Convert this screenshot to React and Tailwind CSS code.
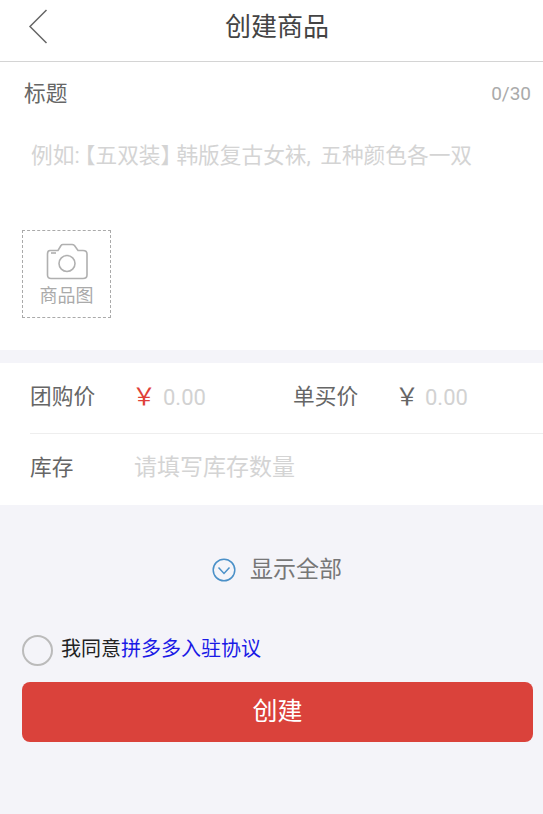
const font = { fontFamily: '"Roboto", "Noto Sans CJK SC", sans-serif' };

function BackIcon() {
  return (
    <svg width="20" height="36" viewBox="0 0 20 36" fill="none" stroke="#666" strokeWidth="1.5">
      <path d="M18.5 1 L2 17.5 L18.5 34" />
    </svg>
  );
}

function CameraIcon() {
  return (
    <svg width="42" height="38" viewBox="0 0 42 38" fill="none" stroke="#b0b0b0" strokeWidth="1.6">
      <path d="M4 8.5 H12 L15 3.5 Q15.5 2.5 17 2.5 H26 Q27.5 2.5 28.5 3.5 L32 8.5 H37 Q41 8.5 41 12 V33 Q41 36.5 37 36.5 H5 Q1.5 36.5 1.5 33 V12 Q1.5 8.5 4 8.5 Z" />
      <circle cx="21" cy="21.5" r="8" />
      <path d="M5 11 H10" />
    </svg>
  );
}

function ChevronCircle() {
  return (
    <svg width="24" height="24" viewBox="0 0 24 24" fill="none" stroke="#4a90c8" strokeWidth="1.5">
      <circle cx="12" cy="12" r="10.8" />
      <path d="M6.5 9.5 L12 15.5 L17.5 9.5" />
    </svg>
  );
}

export default function App() {
  return (
    <div style={font} className="h-[814px] w-[543px] overflow-hidden bg-[#f4f4f9]">
      {/* HEADER */}
      <div className="flex h-[62px] items-center border-b border-[#d4d4d4] bg-white pb-[7px] pl-[28px]">
        <BackIcon />
        <span className="ml-[177px] text-[26px] text-[#444]">创建商品</span>
      </div>

      {/* TITLE */}
      <div className="h-[288px] bg-white">
        <div className="flex items-center justify-between pl-[24px] pr-[12px] pt-[17px]">
          <span className="text-[21.7px] leading-[30px] text-[#666]">标题</span>
          <span className="text-[19px] leading-[30px] text-[#aaa]">0/30</span>
        </div>
        <p className="mt-[32px] whitespace-nowrap pl-[31px] text-[21.7px] leading-[30px] text-[#d4d4d4]">
          例如:<span className="ml-[5px] [font-feature-settings:'halt']">【</span>五双装<span className="mr-[5px] [font-feature-settings:'halt']">】</span>韩版复古女袜,<span className="ml-[4px]"> 五种颜色各一双</span>
        </p>
        <div className="ml-[22px] mt-[59px] flex h-[88px] w-[89px] flex-col items-center border border-dashed border-[#aaa] pt-[11px]">
          <CameraIcon />
          <span className="mt-[4px] text-[18px] leading-[24px] text-[#aaa]">商品图</span>
        </div>
      </div>

      {/* PRICE + STOCK */}
      <div className="mt-[13px] h-[142px] bg-white pl-[30px]">
        <div className="flex h-[71px] items-center border-b border-[#eeeeee] pb-[2px]">
          <span className="w-[102px] text-[21.7px] text-[#666]">团购价</span>
          <span className="w-[31px] text-[24px] text-[#e04038]">{"\uFFE5"}</span>
          <span className="w-[130px] text-[22px] text-[#d2d2d2]">0.00</span>
          <span className="w-[102px] text-[21.7px] text-[#666]">单买价</span>
          <span className="w-[30px] text-[24px] text-[#666]">{"\uFFE5"}</span>
          <span className="text-[22px] text-[#d2d2d2]">0.00</span>
        </div>
        <div className="flex h-[70px] items-center pb-[2px]">
          <span className="w-[104px] text-[21.7px] text-[#666]">库存</span>
          <span className="text-[23px] text-[#d4d4d4]">请填写库存数量</span>
        </div>
      </div>

      {/* SHOW ALL */}
      <div className="mt-[50px] flex items-center pl-[212px]">
        <ChevronCircle />
        <span className="ml-[14px] text-[23px] leading-[30px] text-[#777]">显示全部</span>
      </div>

      {/* AGREEMENT */}
      <div className="mt-[50px] flex items-center pl-[22px]">
        <span className="h-[31px] w-[31px] rounded-full border-2 border-[#bbb]" />
        <span className="ml-[8px] -translate-y-[2px] text-[20px] leading-[30px] text-[#222]">
          我同意<span className="text-[#1a1ae6]">拼多多入驻协议</span>
        </span>
      </div>

      <button className="ml-[22px] mt-[16px] flex h-[60px] w-[511px] items-center justify-center rounded-[8px] bg-[#da423b] text-[25px] text-white">
        创建
      </button>
    </div>
  );
}
